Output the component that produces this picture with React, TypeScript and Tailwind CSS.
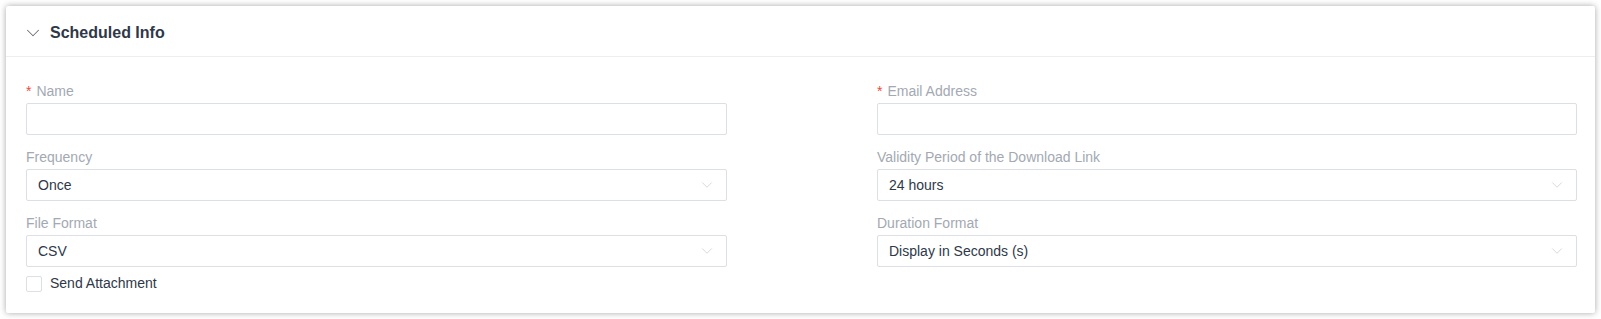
import { ChevronDown } from "lucide-react";

type Field = {
  label: string;
  required?: boolean;
  value?: string;
  select?: boolean;
};

const LEFT: Field[] = [
  { label: "Name", required: true },
  { label: "Frequency", value: "Once", select: true },
  { label: "File Format", value: "CSV", select: true },
];

const RIGHT: Field[] = [
  { label: "Email Address", required: true },
  { label: "Validity Period of the Download Link", value: "24 hours", select: true },
  { label: "Duration Format", value: "Display in Seconds (s)", select: true },
];

function FormItem({ f }: { f: Field }) {
  return (
    <div className="mb-[11px]">
      <div className="flex h-5 items-center text-[14px] leading-5 text-[#a3a9b2] mb-[3px] pt-px">
        {f.required && <span className="mr-[5px] text-[14px] text-[#ee4b3b]">*</span>}
        {f.label}
      </div>
      <div className="flex h-8 items-center justify-between rounded-[2px] border border-[#dcdfe3] bg-white pl-[11px] pr-[10px] text-[14px] text-[#2e3848]">
        <span>{f.value ?? ""}</span>
        {f.select && <ChevronDown size={18} strokeWidth={0.9} className="text-[#c3c7cc]" />}
      </div>
    </div>
  );
}

export default function App() {
  return (
    <div className="h-[319px] w-[1601px] bg-white p-[6px]" style={{ fontFamily: '"Liberation Sans", Arial, sans-serif' }}>
      <div className="h-[307px] w-[1589px] rounded-[2px] bg-white shadow-[0_0_6px_rgba(0,0,0,0.35)]">
        <div className="flex h-[51px] items-center gap-[6px] border-b border-[#eceef0] pl-[16px] pt-[3px]">
          <ChevronDown size={22} strokeWidth={1.1} className="text-[#6b717a]" />
          <span className="text-[16px] font-bold text-[#2f3848]">Scheduled Info</span>
        </div>
        <div className="grid grid-cols-[701px_700px] gap-x-[150px] pl-[20px] pt-[23px]">
          <div>
            {LEFT.map((f) => (
              <FormItem key={f.label} f={f} />
            ))}
            <div className="-mt-[5px] flex items-center gap-[8px]">
              <div className="h-4 w-4 rounded-[2px] border border-[#dcdfe3] bg-white" />
              <span className="text-[14px] text-[#2e3848]">Send Attachment</span>
            </div>
          </div>
          <div>
            {RIGHT.map((f) => (
              <FormItem key={f.label} f={f} />
            ))}
          </div>
        </div>
      </div>
    </div>
  );
}
